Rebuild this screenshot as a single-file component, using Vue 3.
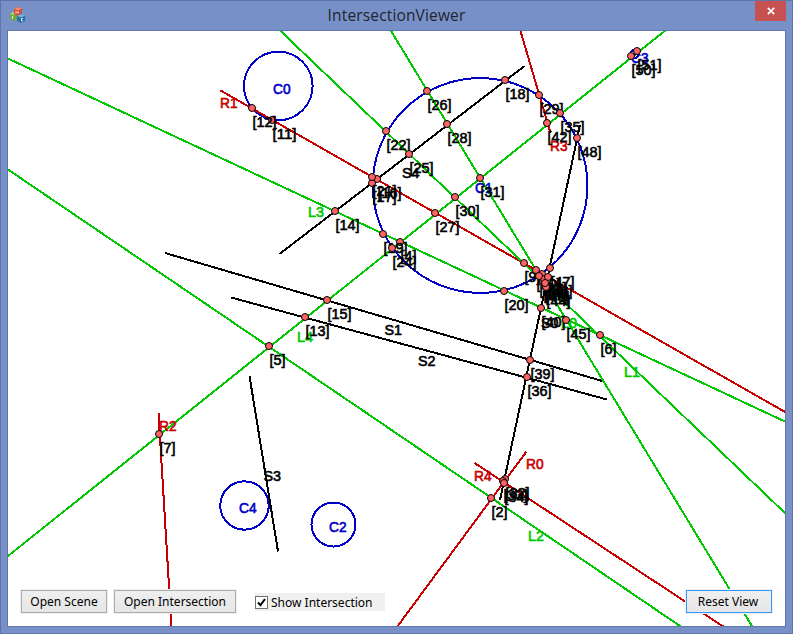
<script setup>
import { ref } from 'vue'

const showIntersection = ref(true)

const lines = [
  { kind: 'seg', p: [580, 125, 500, 500] },
  { kind: 'seg', p: [165, 253, 604, 381.5] },
  { kind: 'seg', p: [231, 297.5, 607, 399.5] },
  { kind: 'seg', p: [249.5, 376, 278, 551.5] },
  { kind: 'seg', p: [279.5, 254, 524.5, 66] },
  { kind: 'ray', p: [526.5, 451.5, 397, 627] },
  { kind: 'ray', p: [220.5, 90.5, 786, 412.5] },
  { kind: 'ray', p: [158.5, 413, 171.5, 627] },
  { kind: 'ray', p: [550.5, 133, 520.2, 30] },
  { kind: 'ray', p: [474.5, 463, 724, 627] },
  { kind: 'line', p: [390.5, 30, 752.5, 627] },
  { kind: 'line', p: [279.5, 30, 786, 514] },
  { kind: 'line', p: [8, 169.5, 681.5, 627] },
  { kind: 'line', p: [8, 58.5, 786, 422] },
  { kind: 'line', p: [8, 556, 666, 30] }
]

const circles = [
  [278.3, 86, 34.3],
  [480.1, 185.5, 107.4],
  [333.5, 524.5, 22],
  [634.5, 54, 4],
  [244.5, 505.5, 24.2]
]

const names = [
  ['S0', 541, 328, 'seg'],
  ['S1', 384.5, 335, 'seg'],
  ['S2', 418, 366, 'seg'],
  ['S3', 263.5, 481, 'seg'],
  ['S4', 402, 178, 'seg'],
  ['R0', 526, 469, 'ray'],
  ['R1', 220, 108, 'ray'],
  ['R2', 159, 431, 'ray'],
  ['R3', 550, 151, 'ray'],
  ['R4', 474, 481, 'ray'],
  ['L0', 561, 328, 'line'],
  ['L1', 624, 377, 'line'],
  ['L2', 528, 541, 'line'],
  ['L3', 308, 217, 'line'],
  ['L4', 297, 342, 'line'],
  ['C0', 273, 94, 'circ'],
  ['C1', 475, 193, 'circ'],
  ['C2', 329, 532, 'circ'],
  ['C3', 631, 63, 'circ'],
  ['C4', 239, 513, 'circ']
]

const points = [
  [2, 491, 498], [4, 400, 242], [5, 269, 346], [6, 600, 335], [7, 159, 434],
  [9, 524, 263], [10, 536, 270], [11, 272, 120], [12, 252, 108],
  [13, 305, 317], [14, 335, 211], [15, 327, 300], [16, 377, 179], [17, 372, 183],
  [18, 505, 80], [19, 383, 234], [20, 504, 291], [21, 372, 177], [22, 386, 131],
  [23, 542, 274], [24, 392, 248], [25, 409, 154], [26, 427, 91], [27, 435, 213],
  [28, 447, 124], [29, 539, 95], [30, 455, 197], [31, 480, 178],
  [32, 505, 479], [33, 503, 481], [34, 504, 483], [35, 560, 113], [36, 527, 377],
  [37, 543, 281], [38, 544, 279], [39, 530, 360], [40, 541, 308], [41, 548, 277],
  [42, 547, 123], [43, 539, 276], [44, 546, 287], [45, 566, 320], [46, 545, 283],
  [47, 550, 268], [48, 577, 138], [50, 631, 56], [51, 637, 51]
]
</script>

<template>
  <div class="window">
    <header class="titlebar">
      <svg class="app-icon" viewBox="0 0 16 16">
        <path d="M0 7l3-2 4 1.500v6L3.500 14 0 12z" fill="#71a641" />
        <path d="M0 7l3-2 4 1.500L3.500 8z" fill="#b3d27a" />
        <path d="M4 2l4-2 4 1.500-.5 6L8 9 4 7z" fill="#d94532" />
        <path d="M4 2l4-2 4 1.500L8 3.500z" fill="#f58a70" />
        <path d="M7 9l4-2 4.500 1.500-.5 5.500-4 2-4-2z" fill="#286fae" />
        <path d="M7 9l4-2 4.500 1.500L11 10.500z" fill="#77b5dd" />
        <path d="M6 6.500V4.500l1.200 1.200 1.200-1.200v2M2.500 9v3M13 11.500h-1.500v2.500h1.500" fill="none" stroke="#fff" stroke-width=".8" />
      </svg>
      <h1 class="title">IntersectionViewer</h1>
      <button class="close" aria-label="Close">
        <svg viewBox="0 0 8 8"><path d="M.8.8l6.400 6.400M7.200.8L.8 7.200" /></svg>
      </button>
    </header>

    <main class="client">
      <svg class="scene" viewBox="8 31 777 595">
        <g class="shapes">
          <circle v-for="(c, i) in circles" :key="'c' + i" class="circ" :cx="c[0]" :cy="c[1]" :r="c[2]" />
          <line
            v-for="(l, i) in lines" :key="'l' + i" :class="l.kind"
            :x1="l.p[0]" :y1="l.p[1]" :x2="l.p[2]" :y2="l.p[3]"
          />
        </g>
        <g class="labels">
          <text
            v-for="n in names" :key="n[0]" :class="n[3]" :x="n[1]" :y="n[2]"
            :textLength="n[3] === 'line' ? 16 : 17.5" lengthAdjust="spacingAndGlyphs"
          >{{ n[0] }}</text>
        </g>
        <g v-if="showIntersection" class="labels">
          <g v-for="p in points" :key="p[0]">
            <circle class="dot" :cx="p[1]" :cy="p[2]" r="3.5" />
            <text
              :x="p[1] + 0.5" :y="p[2] + 19"
              :textLength="p[0] > 9 ? 24 : 16" lengthAdjust="spacingAndGlyphs"
            >[{{ p[0] }}]</text>
          </g>
        </g>
      </svg>

      <div class="toolbar">
        <button class="btn scene-btn">Open Scene</button>
        <button class="btn inter-btn">Open Intersection</button>
        <label class="check">
          <input v-model="showIntersection" type="checkbox">
          <span class="box">
            <svg v-if="showIntersection" viewBox="0 0 11 11"><path d="M2 5.500l2.500 2.700L9 2" /></svg>
          </span>
          <span>Show Intersection</span>
        </label>
        <button class="btn reset-btn">Reset View</button>
      </div>
    </main>
  </div>
</template>

<style>
body { margin: 0; overflow: hidden; }
</style>

<style scoped>
.window {
  box-sizing: border-box;
  width: 793px;
  height: 634px;
  display: flex;
  flex-direction: column;
  padding: 0 6px 6px;
  border: 1px solid #6074a8;
  background: #7890c8;
  font-family: "Noto Sans", sans-serif;
}
.titlebar {
  height: 29px;
  flex: none;
  display: grid;
  grid-template-columns: 31px 1fr 31px;
}
.app-icon { width: 16px; height: 16px; margin: 6px 0 0 3px; }
.title {
  margin: 0;
  text-align: center;
  font: 400 15.5px/28px "Open Sans", sans-serif;
  letter-spacing: 0.15px;
  color: #22252e;
}
.close {
  height: 20px;
  padding: 0;
  border: 0;
  background: #c75050;
  display: flex;
  align-items: center;
  justify-content: center;
}
.close svg { width: 8px; height: 8px; }
.close path { stroke: #fff; stroke-width: 1.7; }
.client {
  flex: 1;
  display: grid;
  border: 1px solid #6077ab;
  background: #fff;
  min-height: 0;
}
.scene, .toolbar { grid-area: 1 / 1; }
.scene { width: 777px; height: 595px; display: block; }
.shapes { shape-rendering: crispEdges; fill: none; stroke-width: 2; }
.shapes .seg { stroke: #000; }
.shapes .ray { stroke: #c80000; }
.shapes .line { stroke: #00c800; }
.shapes .circ { stroke: #0000c8; }
.labels {
  font: 400 14px "Liberation Sans", sans-serif;
  fill: #000;
  stroke: #000;
  stroke-width: 0.6;
}
.labels .ray { fill: #c80000; stroke: #c80000; }
.labels .line { fill: #00c800; stroke: #00c800; }
.labels .circ { fill: #0000c8; stroke: #0000c8; }
.labels .dot { fill: #ff6464; stroke-width: 1; }
.toolbar {
  align-self: end;
  position: relative;
  display: flex;
  align-items: center;
  padding: 0 12px 12px;
  font-size: 12px;
  color: #000;
}
.btn {
  box-sizing: border-box;
  height: 25px;
  padding: 0;
  border: 1px solid #f0f0f0;
  box-shadow: inset 0 0 0 1px #acacac;
  background: linear-gradient(#f0f0f0, #e5e5e5);
  font: inherit;
  color: inherit;
}
.scene-btn { width: 88px; }
.inter-btn { width: 124px; margin-left: 5px; }
.reset-btn { width: 88px; margin-left: auto; padding-right: 2px; box-shadow: inset 0 0 0 1px #3399ff; }
.check {
  width: 130px;
  height: 18px;
  margin: 1px 0 0 18px;
  display: flex;
  align-items: center;
  gap: 3px;
  background: #f0f0f0;
  white-space: nowrap;
}
.check input { display: none; }
.box {
  box-sizing: border-box;
  width: 13px;
  height: 13px;
  border: 1px solid #707070;
  background: #fff;
  display: flex;
}
.box svg { width: 11px; height: 11px; }
.box path { fill: none; stroke: #000; stroke-width: 2; }
</style>
